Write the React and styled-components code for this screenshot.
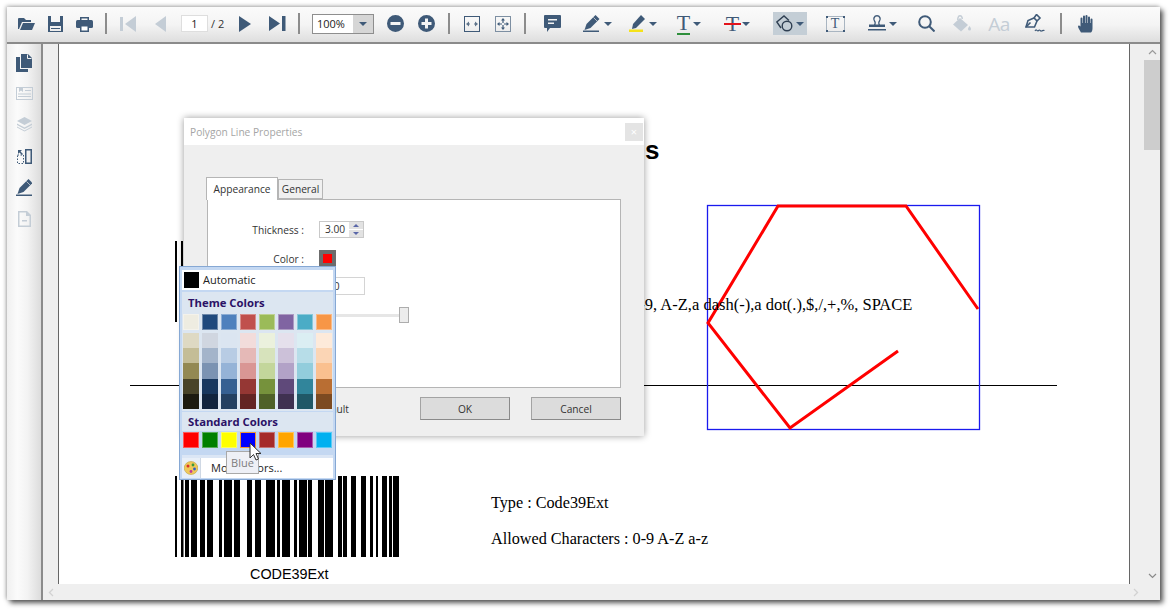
import React from 'react';
import styled, { createGlobalStyle } from 'styled-components';

const INK = '#3f5a78';
const FADED = '#c4cdd6';

const GlobalStyle = createGlobalStyle`
  html, body {
    margin: 0;
    background: #fff;
    overflow: hidden;
  }
  * {
    box-sizing: border-box;
  }
`;

const Screen = styled.div`
  padding: 7px 0 0 7px;
  height: 612px;
  font-family: 'Open Sans', 'Noto Sans', sans-serif;
`;

const AppWindow = styled.div`
  position: relative;
  width: 1153px;
  height: 593px;
  display: flex;
  flex-direction: column;
  background: #efefef;
  box-shadow: 3px 3px 5px rgba(0, 0, 0, 0.65), -1px -1px 4px rgba(0, 0, 0, 0.3);
`;

const Toolbar = styled.div`
  height: 37px;
  flex-shrink: 0;
  display: flex;
  align-items: center;
  padding: 0 0 2px 5px;
  background: linear-gradient(#fbfbfb, #f4f4f4 50%, #dedede);
  border-bottom: 2px solid #8b8b8b;
`;

const Tool = styled.div`
  width: ${(p) => p.$w || 29}px;
  height: 23px;
  margin-left: ${(p) => p.$ml || 0}px;
  flex-shrink: 0;
  display: flex;
  align-items: center;
  justify-content: center;
  gap: 3px;
  background: ${(p) => (p.$active ? '#c4ced6' : 'transparent')};
`;

const Sep = styled.div`
  width: 2px;
  height: 21px;
  flex-shrink: 0;
  margin: 0 ${(p) => p.$r || 6}px 0 ${(p) => p.$l || 6}px;
  background: #8c8c8c;
`;

const Caret = styled.span`
  width: 0;
  height: 0;
  border-left: 4px solid transparent;
  border-right: 4px solid transparent;
  border-top: 4px solid ${INK};
`;

const PageBox = styled.div`
  width: 27px;
  height: 17px;
  margin-left: 5px;
  background: #fff;
  border: 1px solid #dedede;
  font-size: 11px;
  line-height: 15px;
  text-align: center;
  color: #222;
`;

const PageTotal = styled.span`
  width: 21px;
  padding-left: 3px;
  font-size: 11px;
  color: #333;
`;

const ZoomCombo = styled.div`
  width: 62px;
  height: 20px;
  display: flex;
  border: 1px solid #8e8e8e;
  background: #fff;
  font-size: 11px;
  line-height: 18px;
  color: #222;
`;

const ZoomValue = styled.span`
  flex: 1;
  padding-left: 4px;
`;

const ZoomArrow = styled.span`
  width: 20px;
  display: flex;
  align-items: center;
  justify-content: center;
  background: #d6d6d6;
`;

const SerifGlyph = styled.span`
  font-family: 'Liberation Serif', serif;
  font-size: ${(p) => p.$size || 22}px;
  line-height: 20px;
  color: ${INK};
  border-bottom: ${(p) => (p.$under ? `2px solid ${p.$under}` : 'none')};
`;

const StrikeGlyph = styled(SerifGlyph)`
  position: relative;
  &::after {
    content: '';
    position: absolute;
    left: -2px;
    right: -2px;
    top: 9px;
    height: 2px;
    background: #e3141c;
  }
`;

const FrameGlyph = styled.span`
  width: 19px;
  height: 16px;
  display: flex;
  align-items: center;
  justify-content: center;
  background:
    linear-gradient(${INK}, ${INK}) 0 0 / 2px 2px no-repeat,
    linear-gradient(${INK}, ${INK}) 100% 0 / 2px 2px no-repeat,
    linear-gradient(${INK}, ${INK}) 0 100% / 2px 2px no-repeat,
    linear-gradient(${INK}, ${INK}) 100% 100% / 2px 2px no-repeat,
    linear-gradient(#a9b5c1, #a9b5c1) 0 0 / 100% 1px no-repeat,
    linear-gradient(#a9b5c1, #a9b5c1) 0 100% / 100% 1px no-repeat,
    linear-gradient(#a9b5c1, #a9b5c1) 0 0 / 1px 100% no-repeat,
    linear-gradient(#a9b5c1, #a9b5c1) 100% 0 / 1px 100% no-repeat;
  font-family: 'Liberation Serif', serif;
  font-size: 14px;
  color: ${INK};
`;

const SansGlyph = styled.span`
  font-family: 'Open Sans', sans-serif;
  font-size: 19px;
  letter-spacing: -0.5px;
  color: ${FADED};
`;

const Middle = styled.div`
  flex: 1;
  min-height: 0;
  display: flex;
`;

const SideBar = styled.div`
  width: 36px;
  flex-shrink: 0;
  display: flex;
  flex-direction: column;
  align-items: center;
  padding-top: 3px;
  background: linear-gradient(90deg, #f0f0f0, #fbfbfb 30%, #f3f3f3 60%, #dcdcdc);
  border-right: 2px solid #8b8b8b;
`;

const SideItem = styled.div`
  height: 31.2px;
  flex-shrink: 0;
  display: flex;
  align-items: center;
  justify-content: center;
`;

const Viewer = styled.div`
  flex: 1;
  min-width: 0;
  display: flex;
  flex-direction: column;
`;

const ViewerTop = styled.div`
  flex: 1;
  min-height: 0;
  display: flex;
  padding-left: 15px;
`;

const PageCanvas = styled.div`
  position: relative;
  flex: 1;
  background: #fff;
  border-left: 1px solid #666;
  border-right: 1px solid #666;
  overflow: hidden;
  color: #000;
`;

const Drawing = styled.svg`
  position: absolute;
  left: 0;
  top: 0;
`;

const PageText = styled.span`
  position: absolute;
  left: ${(p) => p.$x - 59}px;
  top: ${(p) => p.$y - 44}px;
  white-space: nowrap;
  font-family: ${(p) => (p.$sans ? "'Liberation Sans', sans-serif" : "'Liberation Serif', serif")};
  font-size: ${(p) => p.$size || 16.2}px;
  font-weight: ${(p) => (p.$bold ? 700 : 400)};
  line-height: 1;
`;

const VScroll = styled.div`
  width: 30px;
  flex-shrink: 0;
  display: flex;
  flex-direction: column;
  align-items: flex-end;
`;

const ArrowCell = styled.div`
  width: 16px;
  height: 16px;
  flex-shrink: 0;
  display: flex;
  align-items: center;
  justify-content: center;
`;

const VThumb = styled.div`
  width: 16px;
  height: 90px;
  background: #cdcdcd;
`;

const VSpace = styled.div`
  flex: 1;
`;

const HScroll = styled.div`
  height: 16px;
  flex-shrink: 0;
  display: flex;
  justify-content: space-between;
  padding: 0 16px 0 0;
`;

const Dialog = styled.div`
  position: absolute;
  left: 177px;
  top: 111px;
  width: 460px;
  height: 318px;
  background: #efefef;
  box-shadow: 0 0 7px rgba(0, 0, 0, 0.4);
  font-size: 10.2px;
  color: #333;
`;

const DialogTitle = styled.div`
  height: 27px;
  display: flex;
  align-items: center;
  justify-content: space-between;
  padding: 0 1px 0 6px;
  background: #fff;
  color: #a5a5a5;
`;

const CloseBtn = styled.span`
  width: 18px;
  height: 18px;
  display: flex;
  align-items: center;
  justify-content: center;
  background: #e4e4e4;
  color: #fff;
  font-size: 11px;
`;

const DialogBody = styled.div`
  padding: 32px 23px 0 22px;
`;

const Tabs = styled.div`
  display: flex;
  align-items: flex-end;
  height: 22px;
`;

const Tab = styled.div`
  width: ${(p) => p.$w}px;
  height: ${(p) => (p.$active ? 23 : 20)}px;
  margin-bottom: ${(p) => (p.$active ? -1 : 0)}px;
  position: relative;
  z-index: ${(p) => (p.$active ? 1 : 0)};
  display: flex;
  align-items: center;
  justify-content: center;
  background: ${(p) => (p.$active ? '#fff' : '#f0f0f0')};
  border: 1px solid #b5b5b5;
  border-bottom: ${(p) => (p.$active ? 'none' : '1px solid #b5b5b5')};
`;

const Panel = styled.div`
  width: 414px;
  height: 189px;
  margin-left: 1px;
  padding: 21px 0 0 0;
  background: #fff;
  border: 1px solid #b5b5b5;
  display: grid;
  grid-template-columns: 96px 90px;
  column-gap: 15px;
  grid-template-rows: 29px 27px 30px 16px;
  align-items: start;
  align-content: start;
`;

const FieldLabel = styled.span`
  text-align: right;
  line-height: 18px;
`;

const Spin = styled.div`
  width: 45px;
  height: 17px;
  display: flex;
  border: 1px solid #c9c9c9;
  line-height: 15px;
  padding-left: 5px;
`;

const SpinValue = styled.span`
  flex: 1;
`;

const SpinButtons = styled.span`
  width: 14px;
  display: flex;
  flex-direction: column;
  gap: 1px;
`;

const SpinHalf = styled.span`
  flex: 1;
  display: flex;
  align-items: center;
  justify-content: center;
  background: #e2e2e2;
  &::after {
    content: '';
    border-left: 3px solid transparent;
    border-right: 3px solid transparent;
    ${(p) => (p.$up ? 'border-bottom' : 'border-top')}: 3px solid #5a67a8;
  }
`;

const ColorBtn = styled.div`
  width: 17px;
  height: 17px;
  padding: 4px;
  background: #6c6c6c;
  &::after {
    content: '';
    display: block;
    width: 9px;
    height: 9px;
    background: #f00;
  }
`;

const OpacityInput = styled.div`
  width: 46px;
  height: 18px;
  padding-left: 2px;
  border: 1px solid #d4d4d4;
  line-height: 16px;
`;

const Slider = styled.div`
  position: relative;
  height: 3px;
  width: 85px;
  margin-top: 7px;
  background: #e6e6e6;
`;

const SliderHandle = styled.span`
  position: absolute;
  right: -5px;
  top: -7px;
  width: 10px;
  height: 16px;
  background: #ececec;
  border: 1px solid #adadad;
`;

const Footer = styled.div`
  display: flex;
  justify-content: flex-end;
  align-items: center;
  gap: 21px;
  margin-top: 9px;
`;

const DefaultLabel = styled.span`
  margin-right: 50px;
`;

const PushBtn = styled.div`
  width: 90px;
  height: 23px;
  display: flex;
  align-items: center;
  justify-content: center;
  background: #dcdcdc;
  border: 1px solid #a3a3a3;
  border-right-color: #8a8a8a;
  border-bottom-color: #8a8a8a;
`;

const Popup = styled.div`
  position: absolute;
  left: 172px;
  top: 259px;
  width: 157px;
  height: 214px;
  padding: 3px 2px;
  background: #c4d8f2;
  border: 1px solid #86a8d4;
  font-size: 11px;
  color: #222;
`;

const AutoRow = styled.div`
  height: 20px;
  display: flex;
  align-items: center;
  gap: 4px;
  padding: 0 0 1px 2px;
  background: #fff;
  margin-bottom: 2px;
`;

const AutoSwatch = styled.span`
  width: 15px;
  height: 16px;
  background: #000;
`;

const ThemeBlock = styled.div`
  height: 119px;
  background: #dce6f1;
  padding-left: 1px;
`;

const PopupHeading = styled.div`
  height: ${(p) => p.$h || 22}px;
  display: flex;
  align-items: center;
  padding: 0 0 1px ${(p) => p.$pad || 5}px;
  background: #dce6f1;
  font-size: 11.3px;
  font-weight: 700;
  color: #2b1266;
`;

const SwatchRow = styled.div`
  display: grid;
  grid-template-columns: repeat(8, 16px);
  column-gap: 3px;
`;

const Ramp = styled(SwatchRow)`
  margin-top: 3px;
  grid-auto-rows: 15.2px;
`;

const Swatch = styled.span`
  display: block;
  height: 16px;
  background: ${(p) => p.$color};
  border: 1px solid ${(p) => (p.$selected ? '#f29536' : 'rgba(255, 255, 255, 0.35)')};
`;

const RampCell = styled.span`
  background: ${(p) => p.$color};
`;

const StandardHeading = styled.div`
  margin-top: 1px;
`;

const StandardRow = styled(SwatchRow)`
  margin: 1px 0 0 1px;
`;

const Divider = styled.div`
  height: 3px;
  margin-top: 7px;
  background: #dbe6f5;
`;

const MoreRow = styled.div`
  height: 20px;
  display: flex;
  background: #fff;
`;

const MoreIcon = styled.span`
  width: 19px;
  display: flex;
  align-items: center;
  justify-content: center;
  background: #e8eff8;
  border-right: 1px solid #cfd8e4;
`;

const MoreText = styled.span`
  padding-left: 10px;
  line-height: 20px;
`;

const Tip = styled.div`
  position: absolute;
  left: 46px;
  top: 184px;
  width: 33px;
  height: 23px;
  display: flex;
  align-items: center;
  justify-content: center;
  background: #eef0f6;
  border: 1px solid #a9a9a9;
  color: #7d7d7d;
`;

const Pointer = styled.svg`
  position: absolute;
  left: 69px;
  top: 175px;
`;

const Ic = ({ w, h, fill = INK, children, ...rest }) => (
  <svg width={w} height={h} viewBox={`0 0 ${w} ${h}`} fill={fill} {...rest}>
    {children}
  </svg>
);

const OpenIcon = () => (
  <Ic w={17} h={13}>
    <path d="M0 2a1 1 0 0 1 1-1h5l2 2h5v2H4L1 12H0z" />
    <path d="M5 6h12l-3 7H2z" />
  </Ic>
);
const SaveIcon = () => (
  <Ic w={15} h={16}>
    <path fillRule="evenodd" d="M0 0h15v16H0zM3 0v6h9V0zM2 10v5h11v-5z" />
    <path d="M3 12h9v1H3z" />
  </Ic>
);
const PrintIcon = () => (
  <Ic w={17} h={16}>
    <path d="M4 1h9v3h-1.500V2.500h-6V4H4z" />
    <rect y="4" width="17" height="8" rx="1.500" />
    <path d="M4 9h9v7H4z" />
    <path fill="#fff" d="M5.500 10.500h6V14.500h-6z" />
  </Ic>
);
const FirstIcon = () => (
  <Ic w={17} h={16} fill={FADED}>
    <path d="M0 1h3v14H0zM16 0v16L5 8z" />
  </Ic>
);
const PrevIcon = () => (
  <Ic w={11} h={16} fill={FADED}>
    <path d="M11 0v16L0 8z" />
  </Ic>
);
const NextIcon = () => (
  <Ic w={12} h={16}>
    <path d="M0 0v16L12 8z" />
  </Ic>
);
const LastIcon = () => (
  <Ic w={17} h={15}>
    <path d="M0 0v15L11 7.500zM13 0h3.500v15H13z" />
  </Ic>
);
const MinusIcon = () => (
  <Ic w={17} h={17}>
    <path fillRule="evenodd" d="M8.500 0a8.500 8.500 0 1 1 0 17 8.500 8.500 0 0 1 0-17zM3.500 7v3h10V7z" />
  </Ic>
);
const PlusIcon = () => (
  <Ic w={17} h={17}>
    <path fillRule="evenodd" d="M8.500 0a8.500 8.500 0 1 1 0 17 8.500 8.500 0 0 1 0-17zM7 3.500V7H3.500v3H7v3.500h3V10h3.500V7H10V3.500z" />
  </Ic>
);
const FitWidthIcon = () => (
  <Ic w={16} h={16}>
    <path fillRule="evenodd" d="M0 0h16v16H0zM1 1v14h14V1z" />
    <path d="M2 8l3-2.500v2h1v1H5v2zM14 8l-3-2.500v2h-1v1h1v2z" fill="#5f748b" />
  </Ic>
);
const FitPageIcon = () => (
  <Ic w={16} h={16}>
    <path fillRule="evenodd" d="M0 0h16v16H0zM1 1v14h14V1z" fill="#7d8fa2" />
    <path d="M8 2 10 4.500H8.600V7H7.400V4.500H6zM8 14l2-2.500H8.600V9H7.400v2.500H6zM2 8l2.500-2v1.400H7v1.200H4.500V10zM14 8l-2.500-2v1.400H9v1.200h2.500V10z" />
  </Ic>
);
const CommentIcon = () => (
  <Ic w={17} h={17}>
    <path d="M1 0h15a1 1 0 0 1 1 1v11a1 1 0 0 1-1 1H6l-3 4v-4H1a1 1 0 0 1-1-1V1a1 1 0 0 1 1-1z" />
    <path fill="#f4f4f4" d="M4 4h9v1.500H4zM4 7.500h6V9H4z" />
  </Ic>
);
const PenIcon = ({ line = INK, w = 18 }) => (
  <Ic w={w} h={17}>
    <path d="M12.500 0 16.500 4 7.500 13 1.500 15l2-6z" />
    <path d="M10.500 2.500l3.500 3.500" stroke="#e8e8e8" strokeWidth="0.700" />
    <path d="M0 15.500h16V17H0z" fill={line} />
  </Ic>
);
const MarkerIcon = () => (
  <Ic w={17} h={17}>
    <path d="M12 0l4 4-9 9-4 1 1-5z" />
    <path d="M0 14.500h14V17H0z" fill="#f5e21a" />
  </Ic>
);
const PolygonIcon = () => (
  <Ic w={17} h={17} fill="none" stroke="#2f3f52" strokeWidth="1.400">
    <path d="M5 13 0.800 7 8 1l5 4.500" />
    <circle cx="11" cy="11" r="4.800" />
  </Ic>
);
const StampIcon = () => (
  <Ic w={18} h={17}>
    <path fillRule="evenodd" d="M9 0a4 4 0 0 1 3 6.500c-.700 1-.700 2 0 3h5V12H1V9.500h5c.700-1 .700-2 0-3A4 4 0 0 1 9 0zm0 1.500A2.500 2.500 0 0 0 7 5.500c1 1.200 1 2.800.500 4h3c-.500-1.200-.500-2.800.500-4A2.500 2.500 0 0 0 9 1.500z" />
    <path d="M0 14h18v1.500H0z" />
  </Ic>
);
const SearchIcon = () => (
  <Ic w={17} h={17} fill="none" stroke={INK} strokeWidth="2">
    <circle cx="7" cy="7" r="5.800" />
    <path d="M11 11l5.500 5.500" />
  </Ic>
);
const BucketIcon = () => (
  <Ic w={20} h={17} fill={FADED}>
    <path d="M8 3 16 10 9 16.500 1 9.500z" />
    <path d="M5 5c0-3 1-5 3-5s3 2 3 4H9.500c0-1.500-.500-2.500-1.500-2.500S6.500 3 6.500 5z" />
    <path d="M17.500 11c1 1.500 1.500 2.200 1.500 3a1.500 1.500 0 0 1-3 0c0-.800.500-1.500 1.500-3z" />
  </Ic>
);
const SignIcon = () => (
  <Ic w={21} h={19} fill="none" stroke={INK} strokeWidth="1.600">
    <path d="M1 13 3 6.500 9 4l3 3-2.500 6z" />
    <path d="M1 13l4.500-4.500M9 4l2.500-3.500 3.500 3.500L12 7" />
    <path d="M10 17c1.500-3 2 1 3.500-.500s1.500 1 3 .500 1.500-1 3-.500" strokeWidth="1.200" />
  </Ic>
);
const HandIcon = () => (
  <Ic w={15} h={18}>
    <path d="M3 17.500c-1-2-3-4.500-3-6s1.500-1.500 2.500 0V3.500a1 1 0 0 1 2 0V8h.500V1.500a1 1 0 0 1 2 0V8h.500V1a1 1 0 0 1 2 0v7h.500V2.500a1 1 0 0 1 2 0V8h.500V4.500a1 1 0 0 1 2 0V13c0 2-.500 3.500-1.500 4.500z" />
  </Ic>
);
const PagesIcon = () => (
  <Ic w={16} h={18}>
    <path d="M5 0h7l4 4v10H5z" />
    <path d="M0 3h4v12h8v3H0z" />
    <path d="M11.500 0.500v4h4" fill="none" stroke="#f2f2f2" />
  </Ic>
);
const BookmarkIcon = () => (
  <Ic w={17} h={13} fill={FADED}>
    <path fillRule="evenodd" d="M0 0h17v13H0zM1 1v11h15V1z" />
    <path d="M3 0h4v5L5 3.500 3 5zM9 3h6v1H9zM2 6.500h13v1H2zM2 9h13v1H2z" />
  </Ic>
);
const LayersIcon = () => (
  <Ic w={15} h={15} fill={FADED}>
    <path d="M7.500 0 15 4 7.500 8 0 4z" />
    <path d="M0 6.500 7.500 10.500 15 6.500v1.500L7.500 12 0 8z" />
    <path d="M0 9.500 7.500 13.500 15 9.500v1L7.500 14.500 0 10.500z" />
  </Ic>
);
const ThumbIcon = () => (
  <Ic w={15} h={15}>
    <path fillRule="evenodd" d="M8 0h7v15H8zM9.500 1.500v12h4v-12z" />
    <path d="M0.500 6h6v8.500h-6z" fill="none" stroke={INK} strokeDasharray="1.500 1.500" />
    <path d="M1 1l4 0-1.500 1.500L6 5 5 6 2.500 3.500 1 5z" />
  </Ic>
);
const DocMinusIcon = () => (
  <Ic w={13} h={16} fill={FADED}>
    <path fillRule="evenodd" d="M0 0h9l4 4v12H0zM1.500 1.500v13h10V5H8V1.500z" />
    <path d="M4 9h5v1.500H4z" />
  </Ic>
);
const ChevronUp = ({ color = '#9a9a9a' }) => (
  <Ic w={9} h={6} fill="none" stroke={color} strokeWidth="1.200">
    <path d="M1 5l3.500-3.500L8 5" />
  </Ic>
);
const ChevronDown = ({ color = '#9a9a9a' }) => (
  <Ic w={9} h={6} fill="none" stroke={color} strokeWidth="1.200">
    <path d="M1 1l3.500 3.500L8 1" />
  </Ic>
);
const ChevronSide = ({ left }) => (
  <Ic w={6} h={9} fill="none" stroke="#d2d2d2" strokeWidth="1.300">
    <path d={left ? 'M5 1 1.500 4.500 5 8' : 'M1 1l3.500 3.500L1 8'} />
  </Ic>
);
const PaletteIcon = () => (
  <Ic w={14} h={14} fill="#efc95a">
    <ellipse cx="7" cy="7" rx="6.800" ry="6.500" stroke="#b8952f" strokeWidth="0.500" />
    <circle cx="4" cy="5" r="1.500" fill="#d8322a" />
    <circle cx="9" cy="4" r="1.400" fill="#3c9a3c" />
    <circle cx="10.500" cy="8" r="1.400" fill="#2f62c8" />
    <circle cx="7" cy="10.500" r="1.400" fill="#c23a9a" />
  </Ic>
);

// x position and width of every bar, read off the page
const CODE39_BARS = [
  [175, 2], [181, 2.5], [185, 4], [191, 6], [200, 5], [207, 6], [219, 3], [224, 8], [234, 6],
  [247, 5], [255, 6], [266, 9], [277, 3], [282, 8], [294, 3], [299, 8], [308, 4], [318, 6],
  [325, 8], [338, 4], [343, 4], [351, 5], [361, 5], [370, 3], [376, 2], [382, 5], [389, 3], [393, 6],
];

const THEME_COLORS = ['#eeece1', '#1f497d', '#4f81bd', '#c0504d', '#9bbb59', '#8064a2', '#4bacc6', '#f79646'];
const THEME_RAMP = [
  ['#ded9c3', '#d0d6e0', '#dbe5f1', '#f2dcdb', '#ebf1dd', '#e5e0ec', '#dbeef3', '#fdeada'],
  ['#c4bd97', '#a3b4ca', '#b8cce4', '#e5b9b7', '#d7e3bc', '#ccc1d9', '#b7dde8', '#fbd5b5'],
  ['#938953', '#7b93b2', '#95b3d7', '#d99694', '#c3d69b', '#b2a2c7', '#92cddc', '#fac08f'],
  ['#494429', '#17375e', '#366092', '#953734', '#76923c', '#5f497a', '#31859b', '#b96e33'],
  ['#1d1b10', '#10243e', '#244061', '#632423', '#4f6128', '#3f3151', '#205867', '#7c4a21'],
];
const STANDARD_COLORS = ['#ff0000', '#008000', '#ffff00', '#0000ff', '#a52a2a', '#ffa500', '#800080', '#00b0f0'];

export default function App() {
  return (
    <Screen>
      <GlobalStyle />
      <AppWindow>
        <Toolbar>
          <Tool><OpenIcon /></Tool>
          <Tool><SaveIcon /></Tool>
          <Tool><PrintIcon /></Tool>
          <Sep $l={6} $r={5} />
          <Tool $w={32}><FirstIcon /></Tool>
          <Tool $w={32}><PrevIcon /></Tool>
          <PageBox>1</PageBox>
          <PageTotal>/ 2</PageTotal>
          <Tool $w={32}><NextIcon /></Tool>
          <Tool $w={32}><LastIcon /></Tool>
          <Sep $l={5} $r={12} />
          <ZoomCombo>
            <ZoomValue>100%</ZoomValue>
            <ZoomArrow><Caret /></ZoomArrow>
          </ZoomCombo>
          <Tool $w={31} $ml={6}><MinusIcon /></Tool>
          <Tool $w={31}><PlusIcon /></Tool>
          <Sep />
          <Tool $w={31}><FitWidthIcon /></Tool>
          <Tool $w={31}><FitPageIcon /></Tool>
          <Sep />
          <Tool $w={32} $ml={4}><CommentIcon /></Tool>
          <Tool $w={36} $ml={11}><PenIcon /><Caret /></Tool>
          <Tool $w={36} $ml={10}><MarkerIcon /><Caret /></Tool>
          <Tool $w={36} $ml={10}><SerifGlyph $under="#2f8f3c">T</SerifGlyph><Caret /></Tool>
          <Tool $w={36} $ml={13}><StrikeGlyph>T</StrikeGlyph><Caret /></Tool>
          <Tool $w={34} $ml={17} $active><PolygonIcon /><Caret /></Tool>
          <Tool $w={30} $ml={13}><FrameGlyph>T</FrameGlyph></Tool>
          <Tool $w={36} $ml={14}><StampIcon /><Caret /></Tool>
          <Tool $w={30} $ml={11}><SearchIcon /></Tool>
          <Tool $w={30} $ml={6}><BucketIcon /></Tool>
          <Tool $w={30} $ml={7}><SansGlyph>Aa</SansGlyph></Tool>
          <Tool $w={30} $ml={6}><SignIcon /></Tool>
          <Sep $l={10} $r={8} />
          <Tool $w={30}><HandIcon /></Tool>
        </Toolbar>
        <Middle>
          <SideBar>
            <SideItem><PagesIcon /></SideItem>
            <SideItem><BookmarkIcon /></SideItem>
            <SideItem><LayersIcon /></SideItem>
            <SideItem><ThumbIcon /></SideItem>
            <SideItem><PenIcon w={16} /></SideItem>
            <SideItem><DocMinusIcon /></SideItem>
          </SideBar>
          <Viewer>
            <ViewerTop>
              <PageCanvas>
                <Drawing width="1070" height="540" viewBox="59 44 1070 540">
                  {CODE39_BARS.map(([x, w]) => (
                    <rect key={x} x={x} y="476" width={w} height="81" fill="#000" />
                  ))}
                  <rect x="175" y="241" width="2" height="81" fill="#000" />
                  <rect x="181" y="241" width="2" height="81" fill="#000" />
                  <path d="M130 385.500H1057" stroke="#000" strokeWidth="1" />
                  <rect x="707.500" y="205.500" width="272" height="224" fill="none" stroke="#1a1aee" strokeWidth="1.300" />
                  <path
                    d="M978 309 906 206H778L708 323 790 428 898 351"
                    fill="none"
                    stroke="#f00"
                    strokeWidth="3"
                  />
                </Drawing>
                <PageText $x={645} $y={137} $size={26} $sans $bold>s</PageText>
                <PageText $x={631} $y={297} $size={16.5}>0-9, A-Z,a dash(-),a dot(.),$,/,+,%, SPACE</PageText>
                <PageText $x={491} $y={495}>Type : Code39Ext</PageText>
                <PageText $x={491} $y={531}>Allowed Characters : 0-9 A-Z a-z</PageText>
                <PageText $x={250} $y={567} $size={14.4} $sans>CODE39Ext</PageText>
              </PageCanvas>
              <VScroll>
                <ArrowCell><ChevronUp /></ArrowCell>
                <VThumb />
                <VSpace />
                <ArrowCell><ChevronDown color="#8a8a8a" /></ArrowCell>
              </VScroll>
            </ViewerTop>
            <HScroll>
              <ArrowCell><ChevronSide left /></ArrowCell>
              <ArrowCell><ChevronSide /></ArrowCell>
            </HScroll>
          </Viewer>
        </Middle>

        <Dialog>
          <DialogTitle>
            <span>Polygon Line Properties</span>
            <CloseBtn>×</CloseBtn>
          </DialogTitle>
          <DialogBody>
            <Tabs>
              <Tab $active $w={72}>Appearance</Tab>
              <Tab $w={45}>General</Tab>
            </Tabs>
            <Panel>
              <FieldLabel>Thickness :</FieldLabel>
              <Spin>
                <SpinValue>3.00</SpinValue>
                <SpinButtons>
                  <SpinHalf $up />
                  <SpinHalf />
                </SpinButtons>
              </Spin>
              <FieldLabel>Color :</FieldLabel>
              <ColorBtn />
              <FieldLabel>Opacity :</FieldLabel>
              <OpacityInput>100</OpacityInput>
              <span />
              <Slider><SliderHandle /></Slider>
            </Panel>
            <Footer>
              <DefaultLabel>Set as Default</DefaultLabel>
              <PushBtn>OK</PushBtn>
              <PushBtn>Cancel</PushBtn>
            </Footer>
          </DialogBody>
        </Dialog>

        <Popup>
          <AutoRow>
            <AutoSwatch />
            Automatic
          </AutoRow>
          <ThemeBlock>
            <PopupHeading>Theme Colors</PopupHeading>
            <SwatchRow>
              {THEME_COLORS.map((c) => <Swatch key={c} $color={c} />)}
            </SwatchRow>
            <Ramp>
              {THEME_RAMP.flat().map((c) => <RampCell key={c} $color={c} />)}
            </Ramp>
          </ThemeBlock>
          <StandardHeading>
            <PopupHeading $h={19} $pad={6}>Standard Colors</PopupHeading>
          </StandardHeading>
          <StandardRow>
            {STANDARD_COLORS.map((c) => <Swatch key={c} $color={c} $selected={c === '#0000ff'} />)}
          </StandardRow>
          <Divider />
          <MoreRow>
            <MoreIcon><PaletteIcon /></MoreIcon>
            <MoreText>More Colors...</MoreText>
          </MoreRow>
          <Tip>Blue</Tip>
          <Pointer width="13" height="20" viewBox="0 0 13 20">
            <path d="M1 1v15l3.500-3.500L7 18l2.500-1L7 11.500h5z" fill="#fff" stroke="#333" strokeWidth="1" />
          </Pointer>
        </Popup>
      </AppWindow>
    </Screen>
  );
}
